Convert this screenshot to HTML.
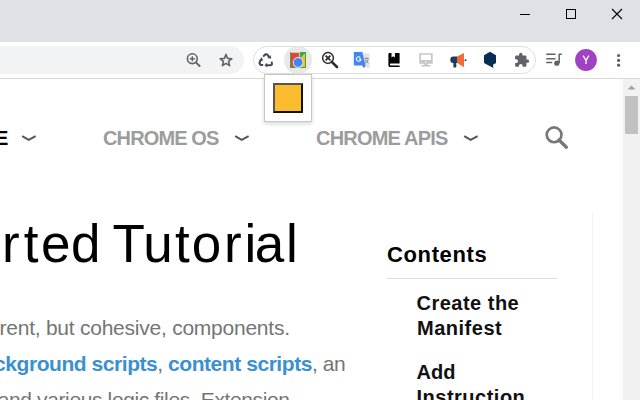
<!DOCTYPE html>
<html><head><meta charset="utf-8">
<style>
*{margin:0;padding:0;box-sizing:border-box}
html,body{width:640px;height:400px;overflow:hidden;background:#fff;font-family:"Liberation Sans",sans-serif}
.a{position:absolute}
.t{position:absolute;white-space:nowrap;line-height:1}
.pre{position:absolute;right:100%;top:0}
#h1 span{position:absolute;top:0}
</style></head><body>
<!-- frame -->
<div class="a" style="left:0;top:0;width:640px;height:42px;background:#dee1e6"></div>
<!-- window controls -->
<div class="a" style="left:520px;top:14px;width:10px;height:1px;background:#000"></div>
<div class="a" style="left:566px;top:9px;width:10px;height:10px;border:1px solid #000"></div>
<svg class="a" style="left:610px;top:7px" width="14" height="14" viewBox="0 0 14 14"><path d="M2 2L12 12M12 2L2 12" stroke="#000" stroke-width="1.1"/></svg>
<!-- toolbar -->
<div class="a" style="left:0;top:42px;width:640px;height:36px;background:#fff"></div>
<div class="a" style="left:0;top:78px;width:640px;height:1px;background:#d8d8d8"></div>
<div class="a" style="left:-40px;top:46px;width:284px;height:28px;background:#f1f3f4;border-radius:14px"></div>
<!-- extension pill -->
<div class="a" style="left:253px;top:46px;width:283px;height:28px;border:1px solid #dfdfdf;border-radius:14px"></div>
<div class="a" style="left:284px;top:46px;width:28px;height:28px;border-radius:14px;background:#e8e8e8"></div>
<svg class="a" style="left:0;top:0" width="640" height="80" viewBox="0 0 640 80">
<!-- zoom -->
<circle cx="192.3" cy="58.7" r="4.9" fill="none" stroke="#5f6368" stroke-width="1.6"/>
<path d="M195.9 62.3L199.6 66" stroke="#5f6368" stroke-width="1.9" stroke-linecap="round"/>
<path d="M192.3 56.2v5M189.8 58.7h5" stroke="#5f6368" stroke-width="1.4"/>
<!-- star -->
<path d="M226.00 54.40 L227.59 58.42 L231.90 58.68 L228.57 61.43 L229.64 65.62 L226.00 63.30 L222.36 65.62 L223.43 61.43 L220.10 58.68 L224.41 58.42z" fill="none" stroke="#5f6368" stroke-width="1.6" stroke-linejoin="round"/>
<!-- recycle -->
<g fill="none" stroke="#3f4b56" stroke-width="2" stroke-linejoin="round">
<path d="M263.2 56.6L265.4 54.2L267.4 54.4L268.8 57"/>
<path d="M261 59.6L259.4 63L260.6 64.9L263.2 64.9"/>
<path d="M271.6 61.6L272 64.4L270.8 65.2L267 65.2"/>
</g>
<g fill="#3f4b56">
<path d="M267.2 58.2L271.4 58.6L270.4 55z"/>
<path d="M259 60.4L263.2 60.8L261.7 57.2z"/>
<path d="M267.2 62.8V67.6L264.4 65.2z"/>
</g>
<!-- active ext icon -->
<rect x="290" y="52" width="1" height="16" fill="#34a853"/>
<rect x="305" y="52" width="1" height="16" fill="#34a853"/>
<rect x="290" y="67" width="16" height="1" fill="#34a853"/>
<rect x="291" y="52.8" width="8.1" height="14.2" fill="#ea4335"/>
<path d="M299.8 52H305V53.2L299.8 59.2z" fill="#34a853"/>
<path d="M305 53.8V67H299.8V59.6z" fill="#fbbc05"/>
<circle cx="298.1" cy="62.4" r="5.3" fill="#f4f4f4"/>
<circle cx="298.1" cy="62.4" r="4.5" fill="#4285f4"/>
<!-- magnifier x -->
<circle cx="328" cy="58" r="5.4" fill="none" stroke="#2b2b2b" stroke-width="1.5"/>
<path d="M331.8 61.8L337 67" stroke="#2b2b2b" stroke-width="2.6" stroke-linecap="round"/>
<path d="M325.6 55.6L330.4 60.4M330.4 55.6L325.6 60.4" stroke="#2b2b2b" stroke-width="1.7"/>
<!-- translate -->
<path d="M362 53.4H369.6V67.8H363.5L362 65.4z" fill="#e4e4e4"/>
<path d="M364.8 58.6h3.8M366.7 57.6v1M365.4 59.6c.8 1.9 1.7 2.9 3 3.4M368 59.6c-.7 1.9-1.6 2.9-2.9 3.6" stroke="#777" stroke-width=".9" fill="none"/>
<path d="M353.8 52H362.3L365.6 65.4H353.8z" fill="#4285f4"/>
<path d="M362.4 65.4H365.6L363.6 67.8z" fill="#2a56c6"/>
<path d="M361 59a2.3 2.3 0 1 1-.67-1.63M358.9 59.1h2.1" stroke="#fff" stroke-width="1.1" fill="none"/>
<!-- book -->
<path d="M389.2 53H391.5V57.6L393.2 56.2L394.9 57.6V53H399.6V63.6H390.8a.9.9 0 0 0 0 1.8H399.6V66.9H390.3A1.6 1.6 0 0 1 388.4 65.3V54.2A1.2 1.2 0 0 1 389.2 53z" fill="#000"/>
<!-- monitor -->
<path d="M419.3 53.3H432.7V63.7H427.7V65H430.5V66.5H421.5V65H424.3V63.7H419.3z M421 54.8V60H431V54.8z M425.3 61.5V62.7H426.7V61.5z" fill="#c6c6c6" fill-rule="evenodd"/>
<!-- megaphone -->
<path d="M457.5 56.4H453.2A2.9 3.3 0 0 0 453.2 63H453.4V66.8A.8.8 0 0 0 454.2 67.6H455.5A.8.8 0 0 0 456.3 66.8V63H457.5z" fill="#1e3a5c"/>
<path d="M457.2 56.6L464 53V67.2L457.2 63z" fill="#f26a36"/>
<circle cx="465.5" cy="60.3" r="1" fill="#1e3a5c"/>
<!-- hexagon -->
<path d="M490 51.8L496 55.2V63L493 64.8L493.4 68L489.6 66.1L484 63V55.2z" fill="#0b2c57"/>
<!-- puzzle -->
<g transform="translate(513.77 52.13) scale(0.667)"><path d="M20.5 11H19V7c0-1.1-.9-2-2-2h-4V3.5C13 2.12 11.88 1 10.5 1S8 2.12 8 3.5V5H4c-1.1 0-1.99.9-1.99 2v3.8H3.5c1.49 0 2.7 1.21 2.7 2.7s-1.21 2.7-2.7 2.7H2V20c0 1.1.9 2 2 2h3.8v-1.5c0-1.49 1.21-2.7 2.7-2.7 1.49 0 2.7 1.21 2.7 2.7V22H17c1.1 0 2-.9 2-2v-4h1.5c1.38 0 2.5-1.12 2.5-2.5S21.88 11 20.5 11z" fill="#5f6368"/></g>
<!-- media -->
<path d="M546.2 54.3H555.5M546.2 58.8H555.5M546.2 62.4H552.2M559.2 63V54.3H561.8" stroke="#5f6368" stroke-width="1.5" fill="none"/>
<circle cx="556.8" cy="63.2" r="2.6" fill="#5f6368"/>
<!-- avatar -->
<circle cx="586" cy="60" r="10.9" fill="#a142c4"/>
<path d="M583.1 55.6L586 60.4L588.9 55.6M586 60.4V64" stroke="#fff" stroke-width="1.3" fill="none"/>
<!-- menu -->
<circle cx="618.6" cy="55.5" r="1.6" fill="#5f6368"/>
<circle cx="618.6" cy="60.4" r="1.6" fill="#5f6368"/>
<circle cx="618.6" cy="65.2" r="1.6" fill="#5f6368"/>
</svg>
<!-- page -->
<div class="t" id="h1" style="left:0;top:217px;font-size:53px;color:#000;width:300px;height:53px"><span style="left:1.9px">r</span><span style="left:23.7px">t</span><span style="left:41.0px">e</span><span style="left:70.9px">d</span><span style="left:112.5px">T</span><span style="left:143.3px">u</span><span style="left:174.9px">t</span><span style="left:191.8px">o</span><span style="left:224.1px">r</span><span style="left:244.4px">i</span><span style="left:254.8px">a</span><span style="left:286.1px">l</span></div>
<div class="t" id="nav0" style="left:-5px;top:128px;font-size:20px;font-weight:bold;color:#000"><span class="pre">M</span>E</div>
<svg class="a" style="left:21px;top:134px" width="16" height="8" viewBox="0 0 16 8"><path d="M1.2 2.2L7.7 5.9L14.6 2.2" fill="none" stroke="#555" stroke-width="2"/></svg>
<div class="t" id="nav1" style="left:103px;top:128px;font-size:20px;letter-spacing:-0.875px;font-weight:bold;color:#9c9c9c">CHROME OS</div>
<svg class="a" style="left:234px;top:134px" width="16" height="8" viewBox="0 0 16 8"><path d="M1.2 2.2L7.7 5.9L14.6 2.2" fill="none" stroke="#555" stroke-width="2"/></svg>
<div class="t" id="nav2" style="left:316px;top:128px;font-size:20px;letter-spacing:-0.8px;font-weight:bold;color:#9c9c9c">CHROME APIS</div>
<svg class="a" style="left:463px;top:134px" width="16" height="8" viewBox="0 0 16 8"><path d="M1.2 2.2L7.7 5.9L14.6 2.2" fill="none" stroke="#555" stroke-width="2"/></svg>
<svg class="a" style="left:543px;top:125px" width="26" height="26" viewBox="0 0 26 26"><circle cx="11.1" cy="9.8" r="7.4" fill="none" stroke="#777" stroke-width="2.6"/><path d="M16 15L23.4 22.2" stroke="#777" stroke-width="3.3" stroke-linecap="round"/></svg>
<div class="t" id="p1" style="left:-0.5px;top:317.3px;font-size:21px;letter-spacing:-0.24px;color:#757575"><span class="pre">fe</span>rent, but cohesive, components.</div>
<div class="t" id="p2" style="left:5.3px;top:352.9px;font-size:21px;letter-spacing:-0.446px;color:#757575"><b style="color:#3b90d1"><span class="pre">c</span>kground scripts</b>, <b style="color:#3b90d1">content scripts</b>, an</div>
<div class="t" id="p3" style="left:9px;top:389px;font-size:21px;letter-spacing:-0.375px;color:#757575"><span class="pre">a</span>nd various logic files. Extension</div>
<div class="t" id="c0" style="left:387.1px;top:244px;font-size:22px;letter-spacing:0.6px;font-weight:bold;color:#000">Contents</div>
<div class="a" style="left:387px;top:278px;width:170px;height:1px;background:#dcdcdc"></div>
<div class="t" id="c1" style="left:416.5px;top:293px;font-size:20px;letter-spacing:0.489px;font-weight:bold;color:#111">Create the</div>
<div class="t" id="c2" style="left:417px;top:318px;font-size:20px;letter-spacing:0.514px;font-weight:bold;color:#111">Manifest</div>
<div class="t" id="c3" style="left:416.5px;top:362px;font-size:20px;letter-spacing:0px;font-weight:bold;color:#111">Add</div>
<div class="t" id="c4" style="left:416.5px;top:387px;font-size:20px;letter-spacing:0.5px;font-weight:bold;color:#111">Instruction</div>
<div class="a" style="left:592px;top:212px;width:1px;height:188px;background:#f4f4f4"></div>
<div class="a" style="left:619px;top:79px;width:4px;height:321px;background:#fbfbfb"></div>
<!-- scrollbar -->
<div class="a" style="left:623px;top:79px;width:17px;height:321px;background:#f1f1f1"></div>
<div class="a" style="left:625px;top:96px;width:13px;height:38px;background:#c1c1c1"></div>
<svg class="a" style="left:623px;top:79px" width="17" height="17" viewBox="0 0 17 17"><path d="M4.5 10.5L8.5 6.5L12.5 10.5z" fill="#a3a3a3"/></svg>
<!-- popup -->
<div class="a" style="left:264px;top:74px;width:48px;height:48px;background:#fff;border:1px solid #c8c8c8;box-shadow:0 2px 4px rgba(0,0,0,.15)"></div>
<div class="a" style="left:273px;top:83px;width:30px;height:30px;background:#fbbd2d;border:2px solid;border-color:#555 #111 #111 #555"></div>
</body></html>
